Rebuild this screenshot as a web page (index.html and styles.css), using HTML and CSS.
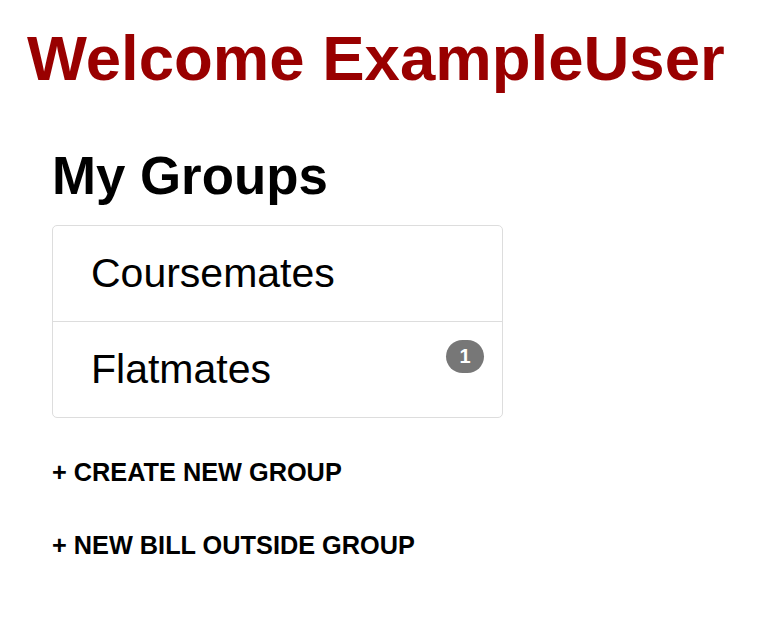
FILE: index.html
```html
<!DOCTYPE html>
<html>
<head>
<meta charset="utf-8">
<link rel="stylesheet" href="styles.css">
</head>
<body>
<div class="page">
  <h1 class="welcome">Welcome ExampleUser</h1>
  <section class="groups">
    <h2 class="groups-title">My Groups</h2>
    <ul class="group-list">
      <li class="group-item"><span class="group-name">Coursemates</span></li>
      <li class="group-item"><span class="group-name">Flatmates</span><span class="badge">1</span></li>
    </ul>
    <a class="action" href="#">+ CREATE NEW GROUP</a>
    <a class="action" href="#">+ NEW BILL OUTSIDE GROUP</a>
  </section>
</div>
</body>
</html>
```
FILE: styles.css
```css
html, body {
  margin: 0;
  padding: 0;
  background: #fff;
}
body {
  font-family: "Liberation Sans", Arial, sans-serif;
  color: #000;
}
.page {
  padding: 22px 0 0 27px;
}
.welcome {
  margin: 0;
  font-size: 63.5px;
  line-height: 72px;
  font-weight: bold;
  color: #990000;
}
.groups {
  margin-top: 52px;
  padding-left: 25px;
  width: 451px;
  display: flex;
  flex-direction: column;
}
.groups-title {
  margin: 0 0 19px 0;
  font-size: 52.8px;
  line-height: 60px;
  font-weight: bold;
}
.group-list {
  list-style: none;
  margin: 0;
  padding: 0;
  border: 1px solid #dddddd;
  border-radius: 5px;
}
.group-item {
  display: flex;
  justify-content: space-between;
  align-items: flex-start;
  padding: 23px 18px 24px 38px;
  font-size: 41px;
  line-height: 48px;
}
.group-item + .group-item {
  border-top: 1px solid #dddddd;
}
.badge {
  margin-top: -5px;
  width: 38px;
  height: 33px;
  border-radius: 17px;
  background: #777777;
  color: #fff;
  font-size: 20px;
  font-weight: bold;
  line-height: 33px;
  text-align: center;
}
.action {
  display: block;
  color: #000;
  text-decoration: none;
  font-size: 25.3px;
  line-height: 30px;
  font-weight: bold;
  margin-top: 39px;
}
.action + .action {
  margin-top: 43px;
}
```
